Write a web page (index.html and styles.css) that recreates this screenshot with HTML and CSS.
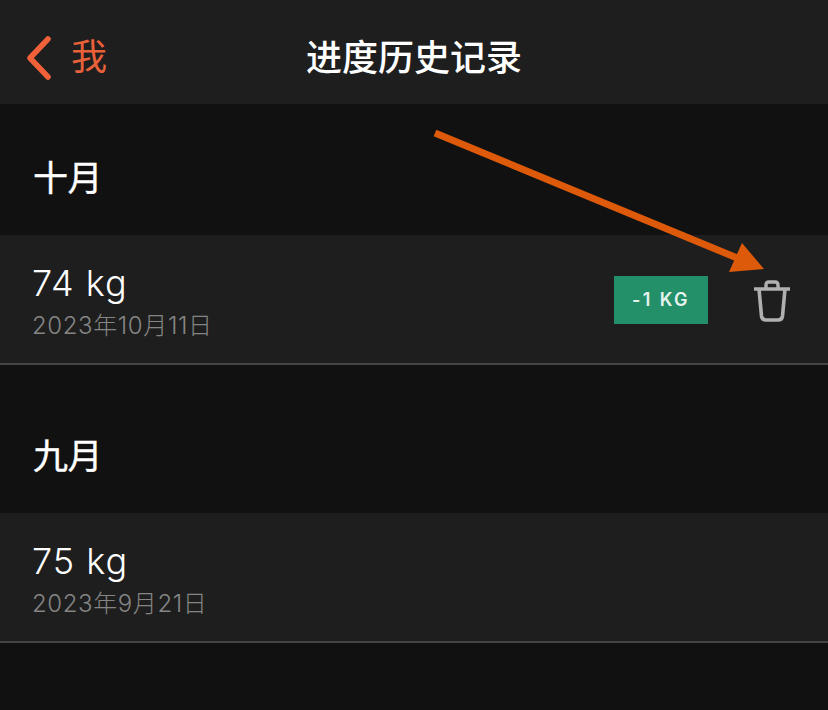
FILE: index.html

```html
<!DOCTYPE html>
<html lang="zh-CN">
<head>
  <meta charset="UTF-8">
  <title>进度历史记录</title>
  <link rel="stylesheet" href="styles.css">
</head>
<body>
  <header class="nav">
    <div class="nav-back">
      <svg class="back-icon" width="26" height="44" viewBox="0 0 26 44">
        <path d="M22 3 L4 22 L22 41" fill="none" stroke="#f0613a" stroke-width="5.5" stroke-linecap="round" stroke-linejoin="round"/>
      </svg>
      <span class="back-label">我</span>
    </div>
    <h1 class="nav-title">进度历史记录</h1>
  </header>

  <section class="month month-first">
    <h2 class="month-name">十月</h2>
    <div class="entry">
      <div class="entry-text">
        <div class="weight">74 kg</div>
        <div class="date">2023年10月11日</div>
      </div>
      <div class="diff">-1 KG</div>
      <svg class="trash" width="38" height="42" viewBox="0 0 38 42">
        <path d="M1 9 H37 M13 8 V5 Q13 2 16 2 H22 Q25 2 25 5 V8" fill="none" stroke="#b0b0b0" stroke-width="3.4"/>
        <path d="M6 9 L8.5 36 Q9 40 13 40 H25 Q29 40 29.5 36 L32 9" fill="none" stroke="#b0b0b0" stroke-width="3.6"/>
      </svg>
    </div>
  </section>

  <section class="month">
    <h2 class="month-name">九月</h2>
    <div class="entry">
      <div class="entry-text">
        <div class="weight">75 kg</div>
        <div class="date">2023年9月21日</div>
      </div>
    </div>
  </section>

  <svg class="arrow" width="828" height="710" viewBox="0 0 828 710">
    <path d="M435 133 L742 260" stroke="#dc5a0a" stroke-width="7" fill="none"/>
    <polygon points="742,243 764,269 729,272" fill="#dc5a0a"/>
  </svg>
</body>
</html>
```

FILE: styles.css

```css
html, body {
  margin: 0;
  height: 100%;
}
body {
  position: relative;
  overflow: hidden;
  background-color: #111111;
  color: #fff;
  font-family: Inter, "Noto Sans CJK SC", sans-serif;
}
.nav {
  position: relative;
  display: flex;
  align-items: center;
  justify-content: center;
  height: 104px;
  background-color: #1e1e1e;
}
.nav-back {
  position: absolute;
  left: 26px;
  top: 36px;
  display: flex;
  align-items: center;
  gap: 19px;
}
.back-label {
  font-size: 36px;
  line-height: 44px;
  color: #e8613a;
  position: relative;
  top: -1px;
}
.nav-title {
  margin: 0;
  font-size: 36px;
  font-weight: 500;
  line-height: 44px;
  position: relative;
  top: 6px;
}
.month {
  padding-top: 17px;
}
.month-first {
  padding-top: 0;
}
.month-name {
  display: flex;
  align-items: center;
  height: 131px;
  margin: 0;
  padding: 12px 33px 0;
  font-size: 35px;
  font-weight: 400;
  letter-spacing: -0.5px;
  box-sizing: border-box;
  -webkit-text-stroke: 0.4px #fff;
}
.entry {
  display: flex;
  align-items: center;
  height: 130px;
  padding: 0 37px 0 33px;
  box-sizing: border-box;
  background-color: #1e1e1e;
  border-bottom: 2px solid #444;
}
.entry-text {
  flex: 1;
  padding-top: 5px;
}
.weight {
  font-size: 36px;
  font-weight: 300;
  line-height: 42px;
  letter-spacing: 1px;
  margin: 0 0 6px -1px;
  color: #fff;
}
.date {
  font-size: 24px;
  font-weight: 300;
  line-height: 32px;
  letter-spacing: 0.6px;
  margin-left: -1px;
  color: #858585;
}
.diff {
  width: 94px;
  height: 48px;
  line-height: 48px;
  margin-right: 45px;
  text-align: center;
  background-color: #23906a;
  color: #e6f3ee;
  font-size: 18px;
  font-weight: 600;
  letter-spacing: 2.4px;
  position: relative;
  top: 1px;
}
.trash {
  display: block;
  position: relative;
  top: 2px;
}
.arrow {
  position: absolute;
  left: 0;
  top: 0;
}
```
